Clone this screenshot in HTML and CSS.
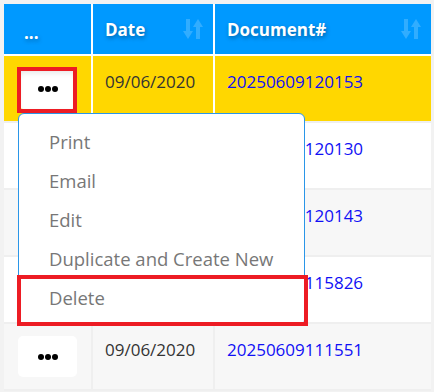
FILE: index.html
```html
<!DOCTYPE html>
<html lang="en">

<head>
  <meta charset="utf-8" />
  <title>Documents</title>
  <link rel="stylesheet" href="styles.css">
</head>

<body>
  <div class="page">
    <table class="grid">
      <colgroup>
        <col class="col-menu" />
        <col class="col-date" />
        <col class="col-doc" />
      </colgroup>
      <thead>
        <tr>
          <th class="menu-head"><span class="head-dots">...</span></th>
          <th>
            <div class="th-inner">
              <span>Date</span>
              <svg class="sort" viewBox="0 0 20 20" width="20" height="20">
                <path d="M3 0h4v12h3l-5 8-5-8h3z" />
                <path d="M15 0l5 8h-3v12h-4V8h-3z" />
              </svg>
            </div>
          </th>
          <th>
            <div class="th-inner">
              <span>Document#</span>
              <svg class="sort" viewBox="0 0 20 20" width="20" height="20">
                <path d="M3 0h4v12h3l-5 8-5-8h3z" />
                <path d="M15 0l5 8h-3v12h-4V8h-3z" />
              </svg>
            </div>
          </th>
        </tr>
      </thead>
      <tbody>
        <tr class="selected">
          <td class="menu-cell"><button class="dots-btn active"><i></i><i></i><i></i></button></td>
          <td>09/06/2020</td>
          <td><a href="#">20250609120153</a></td>
        </tr>
        <tr>
          <td class="menu-cell"><button class="dots-btn"><i></i><i></i><i></i></button></td>
          <td>09/06/2020</td>
          <td><a href="#">20250609120130</a></td>
        </tr>
        <tr class="alt">
          <td class="menu-cell"><button class="dots-btn"><i></i><i></i><i></i></button></td>
          <td>09/06/2020</td>
          <td><a href="#">20250609120143</a></td>
        </tr>
        <tr>
          <td class="menu-cell"><button class="dots-btn"><i></i><i></i><i></i></button></td>
          <td>09/06/2020</td>
          <td><a href="#">20250609115826</a></td>
        </tr>
        <tr class="alt">
          <td class="menu-cell"><button class="dots-btn"><i></i><i></i><i></i></button></td>
          <td>09/06/2020</td>
          <td><a href="#">20250609111551</a></td>
        </tr>
      </tbody>
    </table>

    <ul class="dropdown">
      <li>Print</li>
      <li>Email</li>
      <li>Edit</li>
      <li>Duplicate and Create New</li>
      <li>Delete</li>
    </ul>

    <!-- annotation boxes -->
    <div class="mark mark-button"></div>
    <div class="mark mark-delete"></div>
  </div>
</body>

</html>
```

FILE: styles.css
```css
html,
body {
  margin: 0;
  padding: 0;
  background: #f2f2f2;
  font-family: 'Open Sans', sans-serif;
  overflow: hidden;
}

.page {
  position: relative;
  padding: 4px;
  height: 392px;
  box-sizing: border-box;
}

.grid {
  width: 427px;
  border-collapse: separate;
  border-spacing: 0;
  table-layout: fixed;
}

.col-menu {
  width: 89px;
}

.col-date {
  width: 122px;
}

th {
  height: 50px;
  padding: 0 10px 0 12px;
  background: #0099ff;
  color: #fff;
  font-size: 17px;
  font-weight: 700;
  text-align: left;
  border-right: 2px solid #fff;
  border-bottom: 2px solid #fff;
  text-shadow: 1px 2px 4px rgba(0, 0, 0, 0.35);
}

th:last-child {
  border-right: 0;
}

.menu-head {
  padding-left: 20px;
}

.head-dots {
  position: relative;
  top: 3px;
  font-size: 17px;
}

.th-inner {
  display: flex;
  align-items: center;
  justify-content: space-between;
}

.sort {
  fill: #3eb2ff;
  opacity: 0.8;
}

td {
  height: 67px;
  padding: 14px 12px 0;
  box-sizing: border-box;
  vertical-align: top;
  background: #fff;
  color: #333;
  font-size: 17px;
  border-right: 2px solid #efefef;
  border-bottom: 2px solid #efefef;
}

td:last-child {
  border-right: 0;
}

.alt td {
  background: #f7f7f7;
}

.selected td {
  background: #ffd700;
  border-right-color: #fff;
}

td a {
  color: #1010f5;
  text-decoration: none;
}

.menu-cell {
  padding: 0;
  vertical-align: middle;
  text-align: center;
}

.dots-btn {
  display: inline-flex;
  align-items: center;
  justify-content: center;
  gap: 1px;
  width: 59px;
  height: 41px;
  border: 0;
  border-radius: 5px;
  background: #fff;
  padding: 0;
}

.dots-btn.active {
  box-shadow: inset 0 4px 6px rgba(0, 0, 0, 0.12);
}

.dots-btn i {
  width: 6px;
  height: 6px;
  border-radius: 50%;
  background: #000;
}

.dropdown {
  position: absolute;
  left: 18px;
  top: 113px;
  width: 287px;
  margin: 0;
  padding: 8px 0;
  list-style: none;
  background: #fff;
  border: 1px solid #2a96e8;
  border-radius: 6px;
  box-sizing: border-box;
}

.dropdown li {
  height: 39px;
  line-height: 39px;
  padding-left: 30px;
  color: #777;
  font-size: 18.5px;
}

.mark {
  position: absolute;
  border: 4px solid #ed1c24;
  box-sizing: border-box;
}

.mark-button {
  left: 17px;
  top: 67px;
  width: 60px;
  height: 46px;
}

.mark-delete {
  left: 17px;
  top: 275px;
  width: 291px;
  height: 51px;
}
```
